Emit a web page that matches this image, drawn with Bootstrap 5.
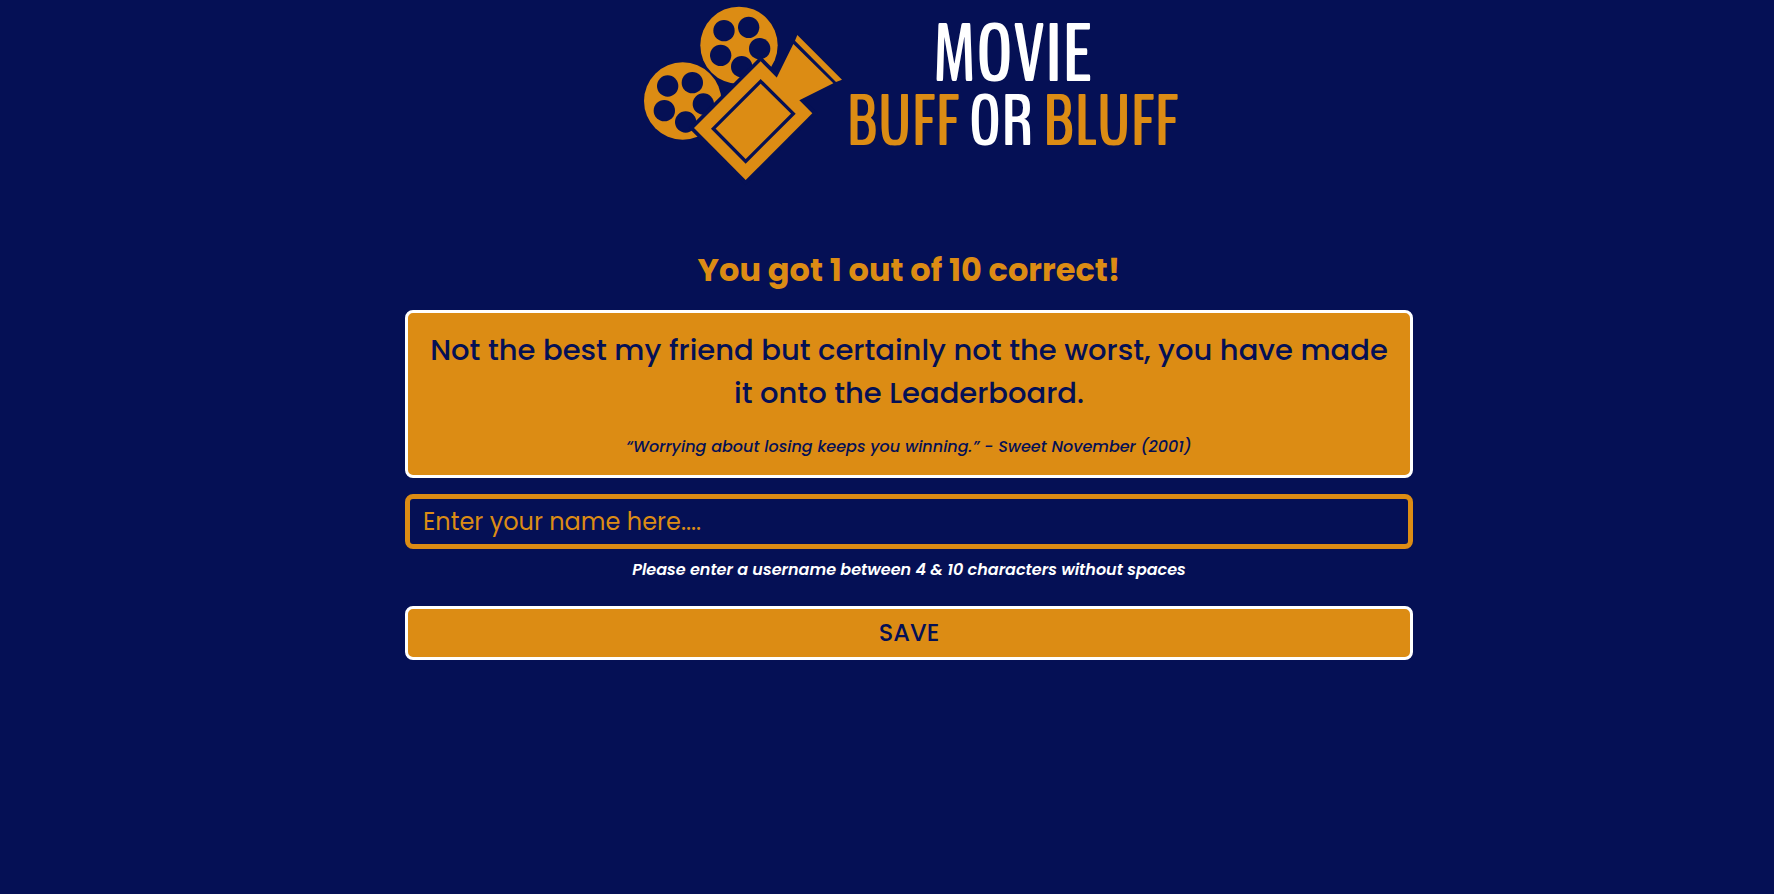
<!DOCTYPE html>
<html lang="en">
<head>
<meta charset="utf-8">
<meta name="viewport" content="width=device-width, initial-scale=1">
<title>Movie Buff or Bluff</title>
<link href="https://cdn.jsdelivr.net/npm/bootstrap@5.3.0/dist/css/bootstrap.min.css" rel="stylesheet">
<style>
  :root { --navy: #051055; --gold: #dc8c14; }
  body { background: var(--navy); color: #fff; font-family: Poppins, Inter, sans-serif; font-size: 16px; }
  .shell { padding-left: 44px; }
  .quiz-col { max-width: 1008px; }
  .logo-art { width: 207px; height: 190px; flex: none; }
  .logo-words { width: 338px; padding-top: 19px; font-family: BenchNine, Homenaje, "Roboto Condensed", sans-serif; font-weight: 700; white-space: nowrap; }
  .logo-top { font-size: 82px; line-height: 72px; }
  .logo-bottom { font-size: 72px; line-height: 62px; }
  .gold { color: var(--gold); }
  .score { font-size: 32px; line-height: 48px; font-weight: 700; padding-top: 56px; margin-bottom: 16px; }
  .result-box { background: var(--gold); color: var(--navy); border: 3px solid #fff; border-radius: 8px; padding: 16px; }
  .message { font-size: 29px; line-height: 43px; font-weight: 500; margin-bottom: 20px; }
  .quote { font-weight: 500; }
  .name-field, .name-field:focus { height: 55px; background: var(--navy); color: var(--gold); border: 5px solid var(--gold); border-radius: 8px; font-size: 24px; padding: 0 13px; }
  .name-field::placeholder { color: var(--gold); opacity: 1; }
  .hint { font-weight: 600; margin: 9px 0 24px; }
  .save-btn, .save-btn:hover { height: 54px; background: var(--gold); color: var(--navy); border: 3px solid #fff; border-radius: 8px; font-size: 24px; font-weight: 500; padding: 0; }
</style>
</head>
<body>
<div class="shell">
  <header class="d-flex justify-content-center">
    <svg class="logo-art" viewBox="21 0 621 570" aria-hidden="true">
      <g fill="#dc8c14"><circle cx="327" cy="136" r="116"/><circle cx="158" cy="303" r="116"/></g>
      <g fill="#051055">
        <circle cx="282" cy="92" r="32"/><circle cx="356" cy="82" r="32"/><circle cx="389" cy="146" r="32"/><circle cx="335" cy="200" r="32"/><circle cx="272" cy="166" r="32"/>
        <circle cx="113" cy="258" r="32"/><circle cx="187" cy="248" r="32"/><circle cx="220" cy="312" r="32"/><circle cx="167" cy="366" r="32"/><circle cx="103" cy="332" r="32"/>
      </g>
      <path d="M392 184L547 340L347 540L192 384Z" fill="#dc8c14" stroke="#051055" stroke-width="22" paint-order="stroke"/>
      <path d="M440 233L490 132L610 250L508 301L490 310L430 250Z" fill="#dc8c14"/>
      <path d="M502 105L636 239L618 246L495 122Z" fill="#dc8c14"/>
      <path d="M392 244L490 341L347 484L250 386Z" fill="none" stroke="#051055" stroke-width="10"/>
    </svg>
    <div class="logo-words text-center">
      <div class="logo-top">MOVIE</div>
      <div class="logo-bottom"><span class="gold">BUFF</span> OR <span class="gold">BLUFF</span></div>
    </div>
  </header>
  <main class="quiz-col mx-auto text-center">
    <h1 class="score gold">You got 1 out of 10 correct!</h1>
    <section class="result-box mb-3">
      <p class="message">Not the best my friend but certainly not the worst, you have made it onto the Leaderboard.</p>
      <p class="quote fst-italic mb-0">“Worrying about losing keeps you winning.” - Sweet November (2001)</p>
    </section>
    <form>
      <input type="text" class="form-control name-field" id="username" placeholder="Enter your name here...." aria-label="Your name" aria-describedby="hint">
      <p class="hint fst-italic" id="hint">Please enter a username between 4 &amp; 10 characters without spaces</p>
      <button type="button" class="btn save-btn w-100">SAVE</button>
    </form>
  </main>
</div>
<script src="https://cdn.jsdelivr.net/npm/bootstrap@5.3.0/dist/js/bootstrap.bundle.min.js"></script>
</body>
</html>
